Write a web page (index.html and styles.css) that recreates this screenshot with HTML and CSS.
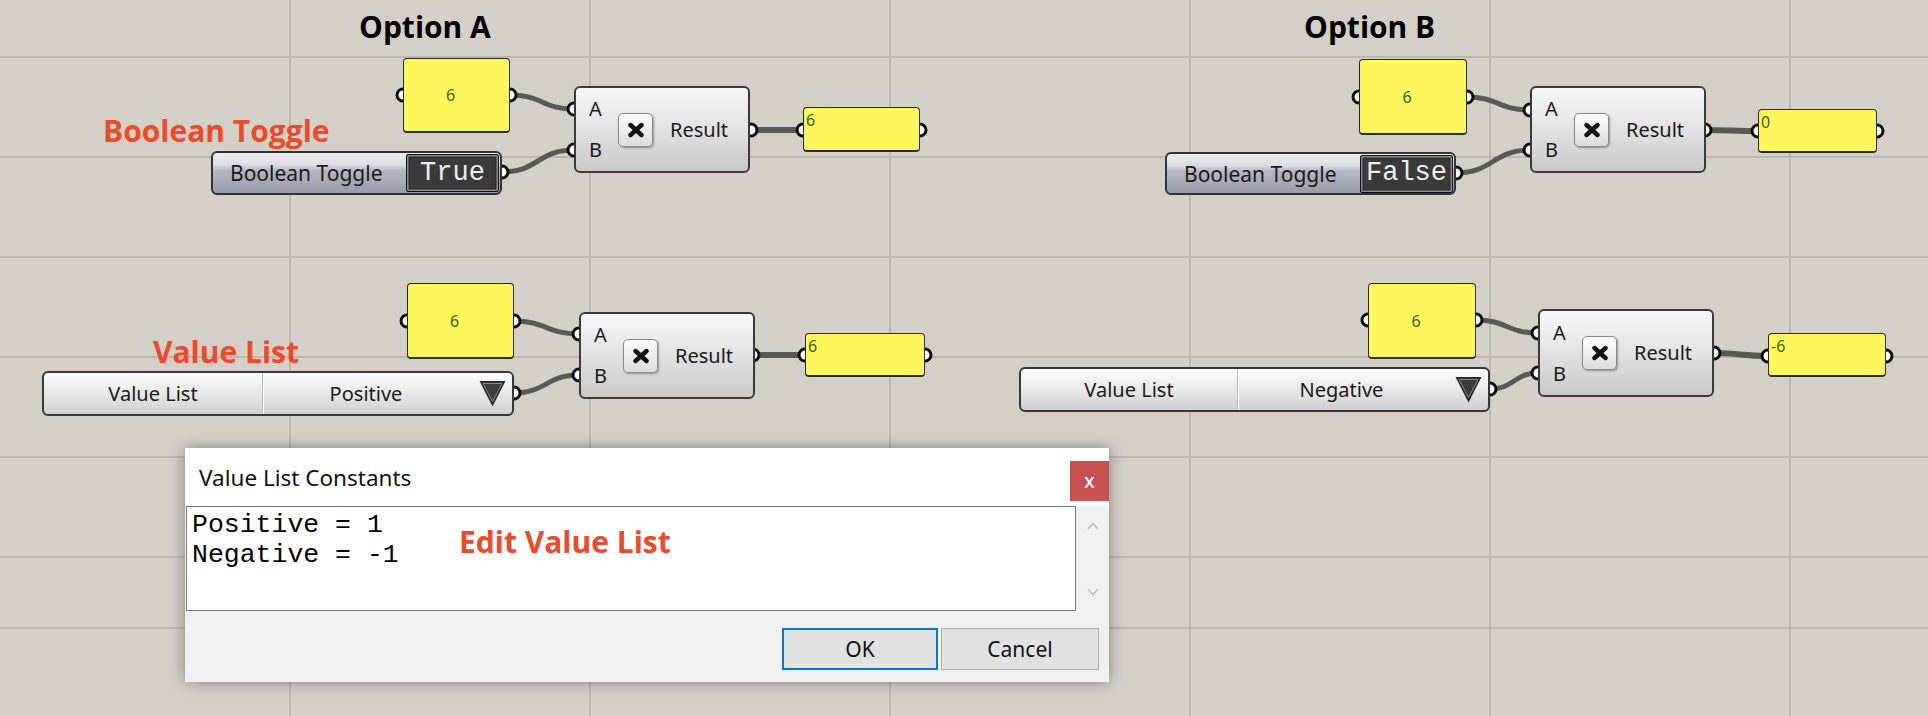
FILE: index.html
```html
<!DOCTYPE html>
<html lang="en">
<head>
<meta charset="utf-8">
<title>Grasshopper – Boolean Toggle vs Value List</title>
<link rel="stylesheet" href="styles.css">
</head>
<body>
<div class="canvas">
  <div class="grid"></div>

  <svg class="wires" width="1928" height="716" viewBox="0 0 1928 716">
    <!-- Option A, row 1 -->
    <path d="M510 95 C542 95 542 109 574 109"/>
    <path d="M502 172 C538 172 538 150 574 150"/>
    <path class="flat" d="M751 130 L803 130"/>
    <!-- Option B, row 1 -->
    <path d="M1467 97 C1498 97 1498 110 1530 110"/>
    <path d="M1456 173 C1493 173 1493 150 1530 150"/>
    <path class="flat" d="M1705 130 C1730 130 1733 131 1758 131"/>
    <!-- Option A, row 2 -->
    <path d="M514 321 C546 321 546 334 579 334"/>
    <path d="M514 393 C546 393 546 375 579 375"/>
    <path class="flat" d="M753 355 L805 355"/>
    <!-- Option B, row 2 -->
    <path d="M1476 320 C1507 320 1507 333 1538 333"/>
    <path d="M1490 389 C1514 389 1514 373 1538 373"/>
    <path class="flat" d="M1714 353 C1741 353 1741 356 1768 356"/>

    <g class="grips">
      <circle cx="403" cy="95" r="6"/><circle cx="510" cy="95" r="6"/>
      <circle cx="574" cy="109" r="6"/><circle cx="574" cy="150" r="6"/>
      <circle cx="751" cy="130" r="6"/><circle cx="803" cy="130" r="6"/>
      <circle cx="920" cy="130" r="6"/><circle cx="502" cy="172" r="6"/>

      <circle cx="1359" cy="97" r="6"/><circle cx="1467" cy="97" r="6"/>
      <circle cx="1530" cy="110" r="6"/><circle cx="1530" cy="150" r="6"/>
      <circle cx="1705" cy="130" r="6"/><circle cx="1758" cy="131" r="6"/>
      <circle cx="1877" cy="131" r="6"/><circle cx="1456" cy="173" r="6"/>

      <circle cx="407" cy="321" r="6"/><circle cx="514" cy="321" r="6"/>
      <circle cx="579" cy="334" r="6"/><circle cx="579" cy="375" r="6"/>
      <circle cx="753" cy="355" r="6"/><circle cx="805" cy="355" r="6"/>
      <circle cx="925" cy="355" r="6"/><circle cx="514" cy="393" r="6"/>

      <circle cx="1368" cy="320" r="6"/><circle cx="1476" cy="320" r="6"/>
      <circle cx="1538" cy="333" r="6"/><circle cx="1538" cy="373" r="6"/>
      <circle cx="1714" cy="353" r="6"/><circle cx="1768" cy="356" r="6"/>
      <circle cx="1886" cy="356" r="6"/><circle cx="1490" cy="389" r="6"/>
    </g>
  </svg>

  <!-- Headings and annotations -->
  <div class="heading heading-a">Option A</div>
  <div class="heading heading-b">Option B</div>
  <div class="note note-toggle">Boolean Toggle</div>
  <div class="note note-list">Value List</div>

  <!-- Option A row 1 -->
  <div class="node panel panel-in pa1">6</div>
  <div class="node comp ca1">
    <div class="ports"><span>A</span><span>B</span></div>
    <div class="xbtn"><svg width="18" height="16" viewBox="0 0 18 16"><path d="M3.5 3 L14.5 13 M14.5 3 L3.5 13"/></svg></div>
    <div class="result">Result</div>
  </div>
  <div class="node panel panel-out oa1">6</div>
  <div class="node toggle ta1">
    <div class="toggle-label">Boolean Toggle</div>
    <div class="toggle-val">True</div>
  </div>

  <!-- Option B row 1 -->
  <div class="node panel panel-in pb1">6</div>
  <div class="node comp cb1">
    <div class="ports"><span>A</span><span>B</span></div>
    <div class="xbtn"><svg width="18" height="16" viewBox="0 0 18 16"><path d="M3.5 3 L14.5 13 M14.5 3 L3.5 13"/></svg></div>
    <div class="result">Result</div>
  </div>
  <div class="node panel panel-out ob1">0</div>
  <div class="node toggle tb1">
    <div class="toggle-label">Boolean Toggle</div>
    <div class="toggle-val">False</div>
  </div>

  <!-- Option A row 2 -->
  <div class="node panel panel-in pa2">6</div>
  <div class="node comp ca2">
    <div class="ports"><span>A</span><span>B</span></div>
    <div class="xbtn"><svg width="18" height="16" viewBox="0 0 18 16"><path d="M3.5 3 L14.5 13 M14.5 3 L3.5 13"/></svg></div>
    <div class="result">Result</div>
  </div>
  <div class="node panel panel-out oa2">6</div>
  <div class="node vlist va2">
    <div class="vl-name">Value List</div>
    <div class="vl-value">Positive</div>
    <div class="vl-arrow"><svg width="27" height="27" viewBox="0 0 27 27"><path class="tri-outer" d="M0.5 1 L26.5 1 L13.5 26.5 Z"/><path class="tri-inner" d="M4 3.5 L23 3.5 L13.5 21.5 Z"/></svg></div>
  </div>

  <!-- Option B row 2 -->
  <div class="node panel panel-in pb2">6</div>
  <div class="node comp cb2">
    <div class="ports"><span>A</span><span>B</span></div>
    <div class="xbtn"><svg width="18" height="16" viewBox="0 0 18 16"><path d="M3.5 3 L14.5 13 M14.5 3 L3.5 13"/></svg></div>
    <div class="result">Result</div>
  </div>
  <div class="node panel panel-out ob2">-6</div>
  <div class="node vlist vb2">
    <div class="vl-name">Value List</div>
    <div class="vl-value">Negative</div>
    <div class="vl-arrow"><svg width="27" height="27" viewBox="0 0 27 27"><path class="tri-outer" d="M0.5 1 L26.5 1 L13.5 26.5 Z"/><path class="tri-inner" d="M4 3.5 L23 3.5 L13.5 21.5 Z"/></svg></div>
  </div>

  <!-- Dialog -->
  <div class="dialog">
    <div class="dlg-title">
      <span>Value List Constants</span>
      <span class="dlg-close">x</span>
    </div>
    <div class="dlg-body">
      <div class="dlg-text">Positive = 1<br>Negative = -1</div>
      <div class="dlg-scroll">
        <svg width="12" height="8" viewBox="0 0 12 8"><path d="M1 7 L6 1.5 L11 7"/></svg>
        <svg width="12" height="8" viewBox="0 0 12 8"><path d="M1 1 L6 6.5 L11 1"/></svg>
      </div>
    </div>
    <div class="dlg-foot">
      <div class="btn btn-ok">OK</div>
      <div class="btn">Cancel</div>
    </div>
  </div>
  <div class="note note-edit">Edit Value List</div>
</div>
</body>
</html>
```

FILE: styles.css
```css
html, body {
  margin: 0;
  padding: 0;
}

body {
  width: 1928px;
  height: 716px;
  overflow: hidden;
}

.canvas {
  position: relative;
  width: 1928px;
  height: 716px;
  overflow: hidden;
  background-color: #d4d0c8;
  font-family: "Noto Sans", "Open Sans", sans-serif;
  color: #1a1a1a;
}

/* ---------- grid ---------- */
.grid {
  position: absolute;
  inset: 0;
  background-image: linear-gradient(to right, #bcb8b0 0, #bcb8b0 2px, transparent 2px);
  background-size: 300px 100%;
  background-position: 289px 0;
}

.grid::before {
  content: "";
  position: absolute;
  left: 0;
  top: 0;
  width: 100%;
  height: 600px;
  background-image: linear-gradient(to bottom, #bcb8b0 0, #bcb8b0 2px, transparent 2px);
  background-size: 100% 100px;
  background-position: 0 56px;
}

.grid::after {
  content: "";
  position: absolute;
  left: 0;
  top: 627px;
  width: 100%;
  height: 2px;
  background: #bcb8b0;
}

/* ---------- wires ---------- */
.wires {
  position: absolute;
  left: 0;
  top: 0;
}

.wires path {
  fill: none;
  stroke: #5a5955;
  stroke-width: 5;
}

.wires path.flat {
  stroke-width: 6;
}

.grips circle {
  fill: #ffffff;
  stroke: #0d0d0d;
  stroke-width: 3;
}

/* ---------- headings / notes ---------- */
.heading,
.note {
  position: absolute;
  font-family: "Open Sans", "Noto Sans", sans-serif;
  font-weight: 700;
  line-height: 1;
  white-space: nowrap;
}

.heading {
  font-size: 30px;
  color: #000;
}

.heading-a { left: 359px; top: 12px; }
.heading-b { left: 1304px; top: 12px; }

.note {
  font-size: 30px;
  color: #ec4a2c;
}

.note-toggle { left: 103px; top: 116px; }
.note-list { left: 153px; top: 337px; }
.note-edit { left: 459px; top: 527px; }

/* ---------- nodes ---------- */
.node {
  position: absolute;
  box-sizing: border-box;
}

.panel {
  background: #fff75e;
  border: 1.5px solid #2b2b2b;
  border-bottom-width: 2px;
  border-radius: 4px;
  color: #3d650c;
  font-size: 16px;
  line-height: 20px;
}

.panel-in {
  display: flex;
  align-items: center;
  justify-content: center;
  padding-right: 12px;
}

.panel-out {
  padding: 2px 0 0 2px;
}

.pa1 { left: 403px; top: 58px; width: 107px; height: 75px; }
.pb1 { left: 1359px; top: 59px; width: 108px; height: 76px; }
.pa2 { left: 407px; top: 283px; width: 107px; height: 76px; }
.pb2 { left: 1368px; top: 283px; width: 108px; height: 76px; }

.oa1 { left: 803px; top: 107px; width: 117px; height: 45px; }
.ob1 { left: 1758px; top: 109px; width: 119px; height: 44px; }
.oa2 { left: 805px; top: 333px; width: 120px; height: 44px; }
.ob2 { left: 1768px; top: 333px; width: 118px; height: 44px; }

/* component */
.comp {
  display: flex;
  align-items: center;
  width: 176px;
  height: 87px;
  padding-left: 13px;
  border: 2px solid #3a3a3a;
  border-radius: 6px;
  background: linear-gradient(#f7f7f7, #e4e4e4 45%, #c9c9c9);
  font-size: 20px;
}

.ports {
  display: flex;
  flex-direction: column;
  gap: 21px;
  width: 14px;
  line-height: 20px;
}

.xbtn {
  box-sizing: border-box;
  display: flex;
  align-items: center;
  justify-content: center;
  width: 35px;
  height: 34px;
  margin-left: 15px;
  border: 1px solid #8a8a8a;
  border-radius: 5px;
  background: linear-gradient(#fdfdfd, #dcdcdc);
  box-shadow: 1px 1px 2px rgba(0, 0, 0, 0.35);
}

.xbtn path {
  fill: none;
  stroke: #111;
  stroke-width: 4.4;
  stroke-linecap: round;
}

.result {
  margin-left: 17px;
  line-height: 20px;
}

.ca1 { left: 574px; top: 86px; }
.cb1 { left: 1530px; top: 86px; }
.ca2 { left: 579px; top: 312px; }
.cb2 { left: 1538px; top: 309px; height: 88px; }

/* boolean toggle */
.toggle {
  display: flex;
  align-items: center;
  width: 291px;
  height: 44px;
  padding-left: 17px;
  padding-right: 1px;
  border: 2px solid #333;
  border-radius: 6px;
  background: linear-gradient(#ececf1 0%, #dcdce3 30%, #b6b6c3 44%, #9a9aab 100%);
}

.toggle-label {
  flex: 1;
  font-size: 21px;
  line-height: 20px;
}

.toggle-val {
  box-sizing: border-box;
  display: flex;
  align-items: center;
  justify-content: center;
  width: 93px;
  height: 38px;
  border: 1px solid #111;
  border-radius: 2px;
  background: #3a3a3a;
  box-shadow: inset 0 0 0 1.5px #8c8c8c, inset 0 0 0 3px #2c2c2c;
  color: #eeeeee;
  font-family: "Liberation Mono", monospace;
  font-size: 27px;
  line-height: 1;
}

.ta1 { left: 211px; top: 151px; }
.tb1 { left: 1165px; top: 152px; height: 43px; }

/* value list */
.vlist {
  display: flex;
  align-items: stretch;
  height: 45px;
  border: 2px solid #383838;
  border-radius: 6px;
  background: linear-gradient(#fcfcfc, #e8e8e8 50%, #d0d0d0);
  font-size: 20px;
  line-height: 20px;
}

.vl-name {
  display: flex;
  align-items: center;
  justify-content: center;
  width: 218px;
  border-right: 1px solid #bdbdbd;
  box-shadow: 1px 0 0 #ffffff;
}

.vl-value {
  flex: 1;
  display: flex;
  align-items: center;
  justify-content: center;
  padding-right: 10px;
}

.vl-arrow {
  display: flex;
  align-items: center;
  margin-right: 6px;
}

.tri-outer {
  fill: #2b2b2b;
}

.tri-inner {
  fill: #3c3c3c;
  stroke: #8a8a8a;
  stroke-width: 1;
}

.va2 { left: 42px; top: 371px; width: 472px; }
.vb2 { left: 1019px; top: 367px; width: 471px; }
.vb2 .vl-name { width: 216px; }

/* ---------- dialog ---------- */
.dialog {
  position: absolute;
  left: 185px;
  top: 448px;
  width: 924px;
  height: 234px;
  display: flex;
  flex-direction: column;
  background: #f0f0f0;
  box-shadow: 0 0 14px rgba(0, 0, 0, 0.38);
}

.dlg-title {
  display: flex;
  align-items: center;
  justify-content: space-between;
  height: 58px;
  padding-left: 14px;
  background: #ffffff;
  font-size: 22.5px;
  color: #111;
}

.dlg-close {
  display: flex;
  align-items: center;
  justify-content: center;
  width: 39px;
  height: 40px;
  margin-top: 8px;
  background: #c75050;
  color: #ffffff;
  font-size: 19px;
  font-weight: 500;
}

.dlg-body {
  display: flex;
  height: 105px;
  padding-left: 1px;
}

.dlg-text {
  box-sizing: border-box;
  width: 890px;
  padding: 3px 5px;
  border: 1px solid #7a7a7a;
  background: #ffffff;
  font-family: "Liberation Mono", monospace;
  font-size: 26.5px;
  line-height: 30px;
  color: #000;
}

.dlg-scroll {
  flex: 1;
  display: flex;
  flex-direction: column;
  align-items: center;
  justify-content: space-between;
  padding: 16px 0 15px;
}

.dlg-scroll path {
  fill: none;
  stroke: #c2c2c2;
  stroke-width: 1.6;
}

.dlg-foot {
  flex: 1;
  display: flex;
  justify-content: flex-end;
  align-items: flex-start;
  gap: 3px;
  padding: 17px 10px 0 0;
}

.btn {
  box-sizing: border-box;
  display: flex;
  align-items: center;
  justify-content: center;
  width: 158px;
  height: 42px;
  border: 1px solid #adadad;
  background: #e1e1e1;
  font-size: 21px;
  color: #111;
}

.btn-ok {
  width: 156px;
  border: 2px solid #0078d7;
}
```
